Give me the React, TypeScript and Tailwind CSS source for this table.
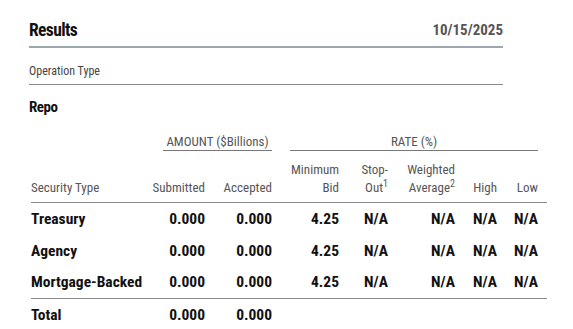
const rows = [
  { name: 'Treasury', sub: '0.000', acc: '0.000', min: '4.25', stop: 'N/A', wavg: 'N/A', high: 'N/A', low: 'N/A' },
  { name: 'Agency', sub: '0.000', acc: '0.000', min: '4.25', stop: 'N/A', wavg: 'N/A', high: 'N/A', low: 'N/A' },
  { name: 'Mortgage-Backed', sub: '0.000', acc: '0.000', min: '4.25', stop: 'N/A', wavg: 'N/A', high: 'N/A', low: 'N/A' },
];

const cols = 'grid grid-cols-[119px_55px_67px_67px_49px_67px_42px_41px_9px]';

const App = () => {
  return (
    <div
      className="min-h-screen bg-white pl-[29px] text-[#111] [font-stretch:condensed]"
      style={{ fontFamily: '"Roboto Condensed", Roboto, "Liberation Sans", sans-serif' }}
    >
      <div className="w-[474px] pt-[18px]">
        <div className="flex items-end justify-between border-b-2 border-[#9ca7ae] pb-[4px]">
          <h1 className="text-[17.5px] leading-[24px] font-bold tracking-[-0.035em]">Results</h1>
          <span className="text-[15px] leading-[24px] font-bold text-[#555]">10/15/2025</span>
        </div>
        <div className="mt-[15px] border-b border-[#8a8a8a] pb-[5px] text-[12px] leading-[16px] text-[#444]">
          Operation Type
        </div>
        <h2 className="mt-[12px] text-[15px] leading-[20px] font-bold tracking-[-0.03em]">Repo</h2>
      </div>

      <div className="ml-[2px] w-[516px]">
        <div className={`${cols} mt-[17px] text-[13px] leading-[16px] text-[#555]`}>
          <div />
          <div className="col-span-2 ml-[13px] border-b border-[#777] text-center">AMOUNT ($Billions)</div>
          <div className="col-span-5 ml-[18px] border-b border-[#777] text-center">RATE (%)</div>
        </div>

        <div className={`${cols} mt-[10px] items-end border-b border-[#888] pb-[5px] text-[13px] leading-[18px] text-[#555]`}>
          <div>Security Type</div>
          <div className="text-right">Submitted</div>
          <div className="text-right">Accepted</div>
          <div className="text-right">Minimum<br />Bid</div>
          <div className="text-right">
            Stop-<br />Out<sup className="text-[10px]">1</sup>
          </div>
          <div className="text-right">
            Weighted<br />Average<sup className="text-[10px]">2</sup>
          </div>
          <div className="text-right">High</div>
          <div className="text-right">Low</div>
          <div />
        </div>

        {rows.map((r, i) => (
          <div
            key={i}
            className={`${cols} h-[32px] items-center pt-[1px] text-[15.5px] font-bold ${i === rows.length - 1 ? 'border-b border-[#888]' : ''}`}
          >
            <div>{r.name}</div>
            <div className="text-right">{r.sub}</div>
            <div className="text-right">{r.acc}</div>
            <div className="text-right">{r.min}</div>
            <div className="text-right">{r.stop}</div>
            <div className="text-right">{r.wavg}</div>
            <div className="text-right">{r.high}</div>
            <div className="text-right">{r.low}</div>
            <div />
          </div>
        ))}

        <div className={`${cols} h-[32px] items-center pt-[1px] text-[15.5px] font-bold`}>
          <div>Total</div>
          <div className="text-right">0.000</div>
          <div className="text-right">0.000</div>
        </div>
      </div>
    </div>
  );
};

export default App;
